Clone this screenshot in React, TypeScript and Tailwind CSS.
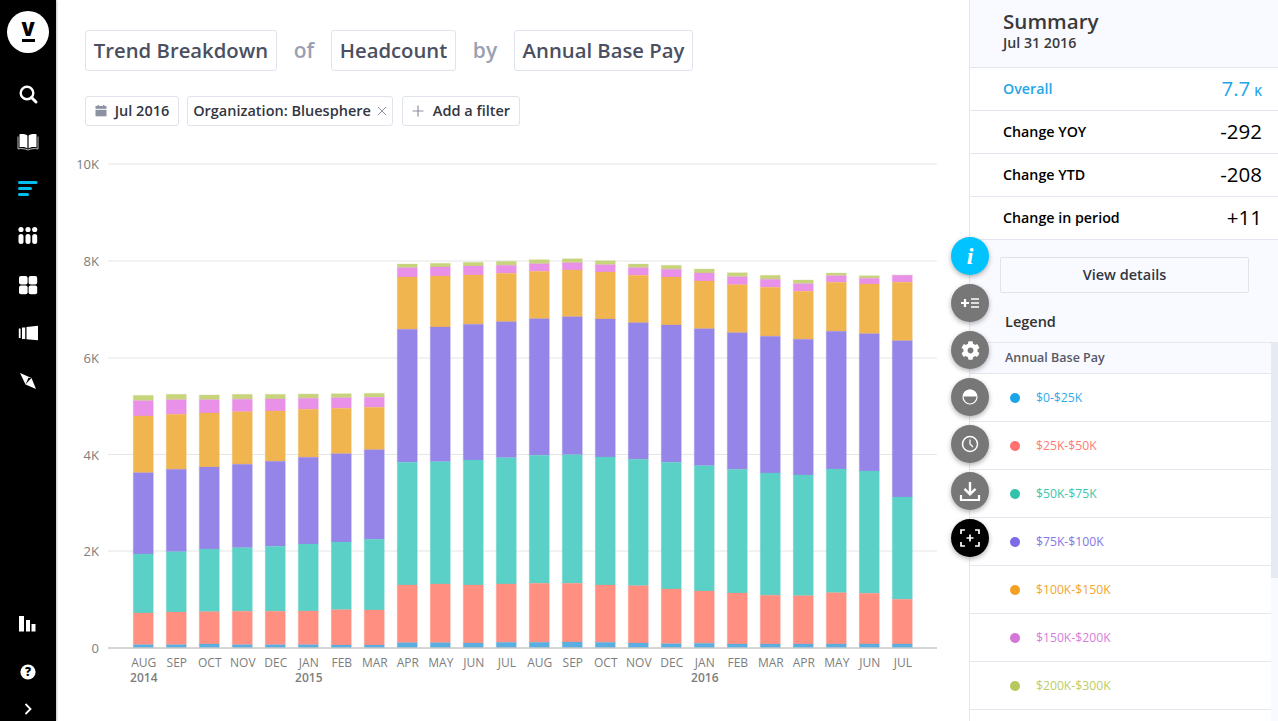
import React from "react";
import { FaCog } from "react-icons/fa";

const COLORS = ["#5aaee0", "#ff8f80", "#5bd0c7", "#9685e8", "#f0b54f", "#e990e9", "#c8d47c"];
// each bar: y of top of [green, pink, orange, purple, teal, red, blue]
const BARS: number[][] = [
  [395.3, 400.7, 416, 472.7, 554, 613, 644.7],
  [394.3, 399.7, 414.3, 469.3, 551.7, 612, 644.7],
  [395, 399.7, 413, 467, 549, 611.7, 644],
  [394.3, 399.3, 411.7, 464.3, 547.7, 611.3, 644.7],
  [394.3, 399, 411, 461.3, 546.3, 611.3, 644.7],
  [394, 398.3, 409.3, 457.3, 544, 611, 644.7],
  [393.7, 397.7, 408.3, 453.7, 542, 609.7, 645],
  [393.3, 397.3, 407.3, 449.7, 539.3, 610, 645],
  [264, 267.7, 277, 329.3, 462.3, 585, 642.7],
  [263.3, 267, 276, 327, 461.7, 584, 642.7],
  [262.3, 266, 275, 324.3, 460, 585, 643],
  [261.3, 265.3, 273.3, 321.7, 457.7, 584, 642.3],
  [259.7, 263.7, 271.3, 318.7, 455.3, 583.3, 642.3],
  [258.7, 262.7, 270, 316.7, 454.7, 583.3, 642],
  [260.7, 264.7, 272, 319, 457, 585, 642.3],
  [264, 267.7, 275.3, 322.7, 459.3, 585.7, 643],
  [265.3, 269.3, 277, 325, 462.3, 589, 643.7],
  [269, 273, 281, 328.7, 465.7, 591, 643.3],
  [272.7, 276.7, 284.7, 332.7, 469.3, 593, 644],
  [275.3, 279.3, 287.3, 336.3, 473, 595.3, 644],
  [280, 283.7, 291.3, 339.3, 475, 595.7, 644],
  [273, 275.7, 282.3, 331.3, 469, 592.7, 644],
  [275.7, 278.3, 284, 333.7, 471, 593.3, 644],
  [275, 275.3, 282.3, 340.7, 497, 599.3, 644],
];
const MONTHS = ["AUG","SEP","OCT","NOV","DEC","JAN","FEB","MAR","APR","MAY","JUN","JUL","AUG","SEP","OCT","NOV","DEC","JAN","FEB","MAR","APR","MAY","JUN","JUL"];
const YEARS: Record<number, string> = { 0: "2014", 5: "2015", 17: "2016" };
const GRID = [
  { y: 164, l: "10K" },
  { y: 261, l: "8K" },
  { y: 358, l: "6K" },
  { y: 454.5, l: "4K" },
  { y: 551, l: "2K" },
];

function Chart() {
  // svg origin is at page (56,150)
  return (
    <svg width="913" height="545" viewBox="56 150 913 545" className="block" style={{ fontFamily: "'Open Sans', sans-serif" }}>
      {GRID.map((g) => (
        <g key={g.l}>
          <line x1="108" x2="937" y1={g.y} y2={g.y} stroke="#e6e6e6" strokeWidth="1.2" />
          <text x="99" y={g.y + 5} textAnchor="end" fontSize="13" fill="#7d7d7d">{g.l}</text>
        </g>
      ))}
      <text x="99" y="653" textAnchor="end" fontSize="13" fill="#7d7d7d">0</text>
      {BARS.map((b, i) => {
        const x = 133.3 + i * 33;
        return (
          <g key={i}>
            {b.map((top, s) => {
              const bottom = s === 6 ? 648 : b[s + 1];
              const col = COLORS[6 - s];
              return (
                <rect key={s} x={x} y={top} width="20" height={Math.max(bottom - top, 0)} fill={col} stroke={col} strokeOpacity="0.18" strokeWidth="1.4" />
              );
            })}
            <text x={x + 10.5} y="667" textAnchor="middle" fontSize="12" fill="#7d7d7d">{MONTHS[i]}</text>
            {YEARS[i] && <text x={x + 10.5} y="682" textAnchor="middle" fontSize="12" fontWeight="600" fill="#7d7d7d">{YEARS[i]}</text>}
          </g>
        );
      })}
      <line x1="108" x2="937" y1="648" y2="648" stroke="#c9c9c9" strokeWidth="1.6" />
    </svg>
  );
}

const Ic = ({ children, h, w = 24 }: { children: React.ReactNode; h: string; w?: number }) => (
  <div className={`flex items-center justify-center ${h}`}>
    <svg width={w} height="24" viewBox="0 0 24 24">{children}</svg>
  </div>
);

function Sidebar() {
  return (
    <div className="w-14 h-full shrink-0 bg-black flex flex-col items-stretch shadow-[1px_0_2px_rgba(0,0,0,0.25)] z-10">
      <div className="h-[70px] flex items-start justify-center pt-[11px]">
        <div className="w-[42px] h-[42px] rounded-full bg-white flex flex-col items-center justify-center">
          <span className="text-[19px] leading-[14px] font-extrabold text-black">V</span>
          <span className="w-[13px] h-[2.5px] bg-black mt-[3px]" />
        </div>
      </div>
      <Ic h="h-[48px]">
        <circle cx="11" cy="11" r="6.3" fill="none" stroke="#fff" strokeWidth="2.4" />
        <line x1="15.5" y1="15.5" x2="20" y2="20" stroke="#fff" strokeWidth="3" strokeLinecap="round" />
      </Ic>
      <Ic h="h-[48px]">
        <path d="M3.5 4.2 C6 3.6 9 4 11.4 5.4 V18.4 C9 17 6 16.6 3.5 17.4Z" fill="#fff" />
        <path d="M12.6 5.4 C15 4 18 3.6 20.5 4.2 V17.4 C18 16.6 15 17 12.6 18.4Z" fill="#fff" />
        <path d="M2 6.5 V19 C5 18.2 9 18.6 12 20 C15 18.6 19 18.2 22 19 V6.5" fill="none" stroke="#cfcfcf" strokeWidth="0.9" />
      </Ic>
      <Ic h="h-[44px]">
        <rect x="2" y="5" width="19.5" height="3" rx="1.5" fill="#00bff0" />
        <rect x="2" y="11" width="14" height="3" rx="1.5" fill="#00bff0" />
        <rect x="2" y="17" width="11" height="3" rx="1.5" fill="#00bff0" />
      </Ic>
      <Ic h="h-[52px]">
        <circle cx="5" cy="5.5" r="2.6" fill="#fff" /><circle cx="12" cy="5.5" r="2.6" fill="#fff" /><circle cx="18.7" cy="5.5" r="2.6" fill="#fff" />
        <rect x="2.5" y="10" width="5" height="10" rx="2.5" fill="#fff" /><rect x="9.5" y="10" width="5" height="10" rx="2.5" fill="#fff" /><rect x="16.2" y="10" width="5" height="10" rx="2.5" fill="#fff" />
      </Ic>
      <Ic h="h-[46px]">
        <rect x="3" y="3" width="8.6" height="8.6" rx="2" fill="#fff" /><rect x="12.6" y="3" width="8.6" height="8.6" rx="2" fill="#fff" />
        <rect x="3" y="12.6" width="8.6" height="8.6" rx="2" fill="#fff" /><rect x="12.6" y="12.6" width="8.6" height="8.6" rx="2" fill="#fff" />
      </Ic>
      <Ic h="h-[50px]">
        <rect x="2.8" y="7.5" width="1.8" height="9.5" fill="#fff" />
        <rect x="6" y="6.5" width="3.2" height="11.5" fill="#fff" />
        <path d="M10.5 6 L22 4.8 V19.2 L10.5 18.2Z" fill="#fff" />
      </Ic>
      <Ic h="h-[46px]">
        <path d="M4 4 L15.5 9 L20 20 L9.5 15.5Z" fill="#fff" />
        <path d="M9.5 15.5 L12.5 8.8 L15.5 9 L12.5 12Z" fill="#000" />
      </Ic>
      <div className="mt-auto flex flex-col">
        <Ic h="h-[48px]">
          <rect x="3" y="4" width="5" height="15.5" fill="#fff" />
          <rect x="10" y="8" width="4" height="11.5" fill="#fff" />
          <rect x="15.5" y="12" width="4" height="7.5" fill="#fff" />
        </Ic>
        <Ic h="h-[48px]">
          <circle cx="12" cy="12" r="7.6" fill="#fff" />
          <text x="12" y="16.2" textAnchor="middle" fontSize="12" fontWeight="800" fill="#000" fontFamily="'Open Sans', sans-serif">?</text>
        </Ic>
        <Ic h="h-[25px]">
          <path d="M9.5 7 L14.5 12 L9.5 17" fill="none" stroke="#fff" strokeWidth="1.8" />
        </Ic>
      </div>
    </div>
  );
}

const Title = ({ children }: { children: React.ReactNode }) => (
  <div className="h-[41px] flex items-center justify-center border border-[#dfe3ec] rounded-[3px] text-[20.3px] font-semibold text-[#4b4f5f] whitespace-nowrap">{children}</div>
);
const Chip = ({ children, w }: { children: React.ReactNode; w: string }) => (
  <div className={`h-[30px] flex items-center justify-center gap-2 border border-[#dfe3ec] rounded-[3px] text-[14.5px] font-semibold text-[#33363f] whitespace-nowrap ${w}`}>{children}</div>
);

function Main() {
  return (
    <div className="flex-1 min-w-0 flex flex-col bg-white">
      <div className="pl-[29px] pt-[30px] flex items-center text-[21px]">
        <div className="w-[192px]"><Title>Trend Breakdown</Title></div>
        <span className="w-[54px] text-center font-semibold text-[#9aa0b2]">of</span>
        <div className="w-[125px]"><Title>Headcount</Title></div>
        <span className="w-[58px] text-center font-semibold text-[#9aa0b2]">by</span>
        <div className="w-[179px]"><Title>Annual Base Pay</Title></div>
      </div>
      <div className="pl-[29px] pt-[25px] flex items-center">
        <Chip w="w-[94px]">
          <svg width="12" height="12" viewBox="0 0 12 12">
            <rect x="0.5" y="1" width="11" height="2.8" fill="#8d92a3" />
            <rect x="0.5" y="4.8" width="11" height="6.5" fill="#8d92a3" />
            <rect x="2.5" y="0" width="1.4" height="1.5" fill="#8d92a3" /><rect x="8" y="0" width="1.4" height="1.5" fill="#8d92a3" />
          </svg>
          Jul 2016
        </Chip>
        <div className="w-2" />
        <Chip w="w-[206px]">
          Organization: Bluesphere
          <svg width="10" height="10" viewBox="0 0 10 10" className="-ml-[2px]"><path d="M1 1 L9 9 M9 1 L1 9" stroke="#8d92a3" strokeWidth="1" /></svg>
        </Chip>
        <div className="w-[9px]" />
        <Chip w="w-[118px]">
          <svg width="12" height="12" viewBox="0 0 12 12" className="mr-[1px]"><path d="M6 0.5 V11.5 M0.5 6 H11.5" stroke="#8d92a3" strokeWidth="1.2" /></svg>
          Add a filter
        </Chip>
      </div>
      <div className="pt-6"><Chart /></div>
    </div>
  );
}

const SumRow = ({ label, value, blue }: { label: string; value: React.ReactNode; blue?: boolean }) => (
  <div className={`h-[43px] bg-white border-b border-[#e3e7f0] pl-[33px] pr-4 flex items-center justify-between ${blue ? "text-[#1fa6e8]" : "text-black"}`}>
    <span className="text-[14.25px] font-semibold">{label}</span>
    <span className="text-[20.5px] leading-none -translate-y-[1px]">{value}</span>
  </div>
);

const LEGEND: [string, string, string][] = [
  ["$0-$25K", "#1ba4e8", "#2fabe9"],
  ["$25K-$50K", "#ff7070", "#ff7b73"],
  ["$50K-$75K", "#32c1aa", "#3cc5ae"],
  ["$75K-$100K", "#7c6be6", "#8575e6"],
  ["$100K-$150K", "#f3a023", "#f3a52e"],
  ["$150K-$200K", "#d375d9", "#d67edb"],
  ["$200K-$300K", "#b6c95c", "#bccd66"],
];

function Panel() {
  return (
    <div className="w-[309px] h-full shrink-0 bg-[#f9faff] border-l border-[#e3e7f0] flex flex-col">
      <div className="h-[68px] pl-[33px] pt-[8px] border-b border-[#e3e7f0]">
        <div className="text-[20.6px] leading-[27px] font-semibold text-[#3a3a3a]">Summary</div>
        <div className="text-[14.2px] leading-[16px] font-semibold text-[#3a3a3a]">Jul 31 2016</div>
      </div>
      <SumRow label="Overall" blue value={<>7.7<span className="text-[12px] font-semibold ml-[4px]">K</span></>} />
      <SumRow label="Change YOY" value="-292" />
      <SumRow label="Change YTD" value="-208" />
      <SumRow label="Change in period" value="+11" />
      <div className="pl-[30px] pt-[17px]">
        <div className="w-[249px] h-[36px] border border-[#dfe3ec] rounded-[2px] flex items-center justify-center text-[14.5px] font-semibold text-[#33363f]">View details</div>
      </div>
      <div className="h-[50px] pl-[35px] pt-[19px] text-[14.5px] leading-[20px] font-semibold text-[#333] border-b border-[#e3e7f0]">Legend</div>
      <div className="relative flex-1 overflow-hidden">
        <div className="absolute right-0 top-0 w-[7px] h-[235px] bg-[#e6ebf3]" />
        <div className="mr-[7px]">
          <div className="h-[31px] pl-[35px] flex items-center text-[12.5px] font-semibold text-[#555968] border-b border-[#e3e7f0]">Annual Base Pay</div>
          {LEGEND.map(([t, d, c]) => (
            <div key={t} className="h-[48px] bg-white border-b border-[#e3e7f0] flex items-center pl-[40px]">
              <span className="w-[10px] h-[10px] rounded-full" style={{ background: d }} />
              <span className="ml-[16px] text-[12.2px] font-medium translate-y-[1px]" style={{ color: c }}>{t}</span>
            </div>
          ))}
        </div>
        <div className="bg-white h-[20px] mr-[7px]" />
      </div>
    </div>
  );
}

const Act = ({ children, bg = "bg-[#777777]" }: { children: React.ReactNode; bg?: string }) => (
  <div className={`w-[38px] h-[38px] rounded-full flex items-center justify-center shadow-[0_2px_5px_rgba(0,0,0,0.3)] ${bg}`}>{children}</div>
);

export default function App() {
  return (
    <div className="relative w-[1278px] h-[721px] overflow-hidden flex bg-white" style={{ fontFamily: "'Open Sans', sans-serif" }}>
      <Sidebar />
      <Main />
      <Panel />
      <div className="absolute left-[951px] top-[237px] flex flex-col gap-[9px]">
        <Act bg="bg-[#00c3ff]">
          <span className="text-white text-[24px] font-bold italic leading-none" style={{ fontFamily: "'Liberation Serif', serif" }}>i</span>
        </Act>
        <Act>
          <svg width="20" height="14" viewBox="0 0 20 14"><path d="M1 7 H9 M5 3 V11" stroke="#fff" strokeWidth="2.2" /><path d="M11 3 H19 M11 7 H19 M11 11 H19" stroke="#fff" strokeWidth="1.6" /></svg>
        </Act>
        <Act><FaCog size={19} color="#fff" /></Act>
        <Act>
          <svg width="18" height="18" viewBox="0 0 18 18"><circle cx="9" cy="9" r="7" fill="none" stroke="#fff" strokeWidth="1.2" /><path d="M2 8.5 A7 7 0 0 1 16 8.5Z" fill="#fff" /></svg>
        </Act>
        <Act>
          <svg width="20" height="20" viewBox="0 0 20 20"><circle cx="10" cy="10" r="7.5" fill="none" stroke="#fff" strokeWidth="1.5" /><path d="M10 5.5 V10 L13 13" fill="none" stroke="#fff" strokeWidth="1.3" /></svg>
        </Act>
        <Act>
          <svg width="22" height="22" viewBox="0 0 22 22"><path d="M11 2 V14 M5.5 8.8 L11 14.3 L16.5 8.8" fill="none" stroke="#fff" strokeWidth="2.4" /><path d="M2 15 V20 H20 V15" fill="none" stroke="#fff" strokeWidth="2.2" /></svg>
        </Act>
        <Act bg="bg-black">
          <svg width="20" height="18" viewBox="0 0 20 18"><path d="M1 5 V1 H5 M15 1 H19 V5 M19 13 V17 H15 M5 17 H1 V13" fill="none" stroke="#fff" strokeWidth="1.7" /><path d="M10 5.5 V12.5 M6.5 9 H13.5" stroke="#fff" strokeWidth="1.7" /></svg>
        </Act>
      </div>
    </div>
  );
}
